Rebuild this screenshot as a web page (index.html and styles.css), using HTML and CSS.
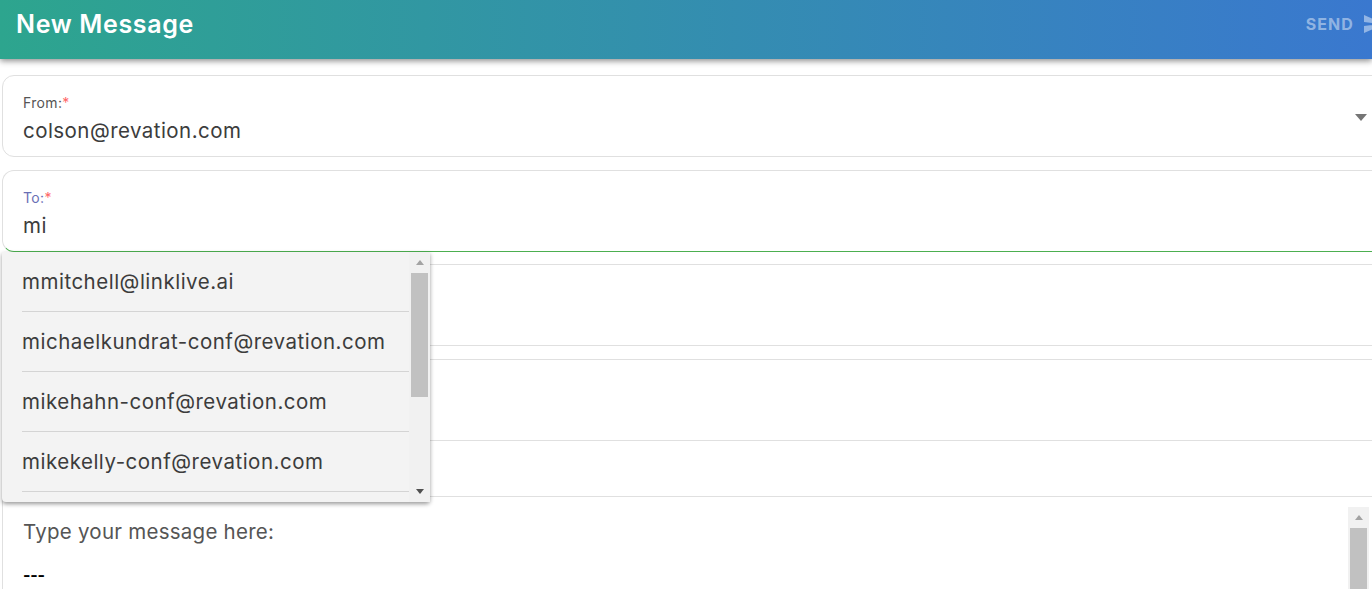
FILE: index.html
```html
<!DOCTYPE html>
<html lang="en">
<head>
<meta charset="utf-8">
<title>New Message</title>
<link rel="stylesheet" href="styles.css">
</head>
<body>
<div class="page">
  <header class="topbar">
    <h1 class="title">New Message</h1>
    <div class="send">
      <span class="send-label">SEND</span>
      <svg class="send-icon" viewBox="0 0 24 24" width="24" height="24"><path d="M2.01 21 23 12 2.01 3 2 10l15 2-15 2z"/></svg>
    </div>
  </header>
  <main class="form">
    <div class="field">
      <label class="field-label">From:<span class="req">*</span></label>
      <div class="field-value">colson@revation.com</div>
      <span class="caret"></span>
    </div>
    <div class="field field-active">
      <label class="field-label label-active">To:<span class="req">*</span></label>
      <div class="field-value">mi</div>
      <div class="menu">
        <ul class="menu-list">
          <li class="menu-item">mmitchell@linklive.ai</li>
          <li class="menu-item">michaelkundrat-conf@revation.com</li>
          <li class="menu-item">mikehahn-conf@revation.com</li>
          <li class="menu-item">mikekelly-conf@revation.com</li>
        </ul>
        <div class="scrollbar menu-scroll">
          <span class="arrow-up"></span>
          <span class="thumb menu-thumb"></span>
          <span class="arrow-down"></span>
        </div>
      </div>
    </div>
    <div class="row"></div>
    <div class="row"></div>
    <div class="row row-short"></div>
    <div class="editor">
      <div class="editor-text">
        <p class="prompt">Type your message here:</p>
        <p class="dashes">---</p>
      </div>
      <div class="scrollbar editor-scroll">
        <span class="arrow-up"></span>
        <span class="thumb"></span>
      </div>
    </div>
  </main>
</div>
</body>
</html>
```
FILE: styles.css
```css
* { box-sizing: border-box; }
html, body { margin: 0; height: 589px; overflow: hidden; background: #fff; }
body { font-family: "Inter", "Open Sans", sans-serif; color: #3c3c3c; }
.page { width: 1372px; height: 589px; overflow: hidden; }
.topbar {
  width: 1372px; height: 59px; display: flex; align-items: center; justify-content: space-between;
  padding: 0 0 12px 16px; overflow: hidden; position: relative; z-index: 1;
  background: linear-gradient(90deg, #2da58e 0%, #3a78cf 100%);
  box-shadow: 0 2px 6px rgba(0, 0, 0, .45);
}
.title { margin: 0; font-size: 25px; font-weight: 600; color: #fff; letter-spacing: .65px; line-height: 24px; }
.send { display: flex; align-items: center; gap: 8px; flex: none; margin-right: -14px; color: rgba(255, 255, 255, .45); }
.send-label { font-size: 16px; font-weight: 700; letter-spacing: 1.1px; }
.send-icon { fill: currentColor; flex: none; }
.form { width: 1392px; padding: 16px 0 0 2px; }
.field {
  position: relative; height: 82px; margin-bottom: 13px; padding: 18px 20px 0;
  background: #fff; border: 1px solid #e0e0e0; border-radius: 12px;
}
.field-active { border-bottom-color: #4caf50; margin-bottom: 12px; }
.field-label { display: block; font-size: 14px; line-height: 18px; color: #555; letter-spacing: .35px; }
.label-active { color: #6a6fb5; }
.req { color: #f66; }
.field-value { font-size: 20.5px; line-height: 28px; margin-top: 5px; color: #3c3c3c; letter-spacing: .45px; }
.caret {
  position: absolute; top: 38px; right: 24px; width: 0; height: 0;
  border-left: 6px solid transparent; border-right: 6px solid transparent; border-top: 7px solid #757575;
}
.row { height: 82px; margin-bottom: 13px; border: 1px solid #e0e0e0; border-left: 0; border-right: 0; }
.row:nth-of-type(4) { margin-bottom: 0; }
.row-short { height: 56px; margin-bottom: 0; border-top: 0; }
.menu {
  position: absolute; z-index: 5; left: -1px; top: 81px; width: 428px; height: 250px; display: flex;
  background: #f3f3f3; border-radius: 0 0 4px 4px;
  box-shadow: 0 2px 4px rgba(0, 0, 0, .4);
}
.menu-list { flex: 1; margin: 0; padding: 0 0 0 20px; list-style: none; overflow: hidden; }
.menu-item {
  height: 60px; display: flex; align-items: center; font-size: 20.5px; letter-spacing: .5px; white-space: nowrap; color: #3c3c3c;
  border-bottom: 1px solid #d4d4d4;
}
.scrollbar { position: relative; width: 21px; background: #f1f1f1; flex: none; display: block; }
.thumb { position: absolute; left: 2px; right: 2px; top: 21px; background: #c1c1c1; bottom: 0; }
.menu-thumb { bottom: auto; height: 124px; }
.arrow-up, .arrow-down {
  position: absolute; left: 50%; margin-left: -4px; width: 0; height: 0;
  border-left: 4px solid transparent; border-right: 4px solid transparent;
}
.arrow-up { top: 8px; border-bottom: 5px solid #a3a3a3; }
.arrow-down { bottom: 8px; border-top: 5px solid #505050; }
.editor { display: flex; justify-content: space-between; height: 100px; padding: 10px 23px 0 20px; border-left: 1px solid #e0e0e0; }
.editor-text { padding-top: 11px; }
.prompt { margin: 0; font-size: 20.5px; line-height: 28px; color: #555; letter-spacing: .25px; }
.dashes { margin: 15px 0 0; font-size: 16px; font-weight: 700; letter-spacing: -.2px; line-height: 28px; color: #000; }
.editor-scroll { height: 100px; }
```
